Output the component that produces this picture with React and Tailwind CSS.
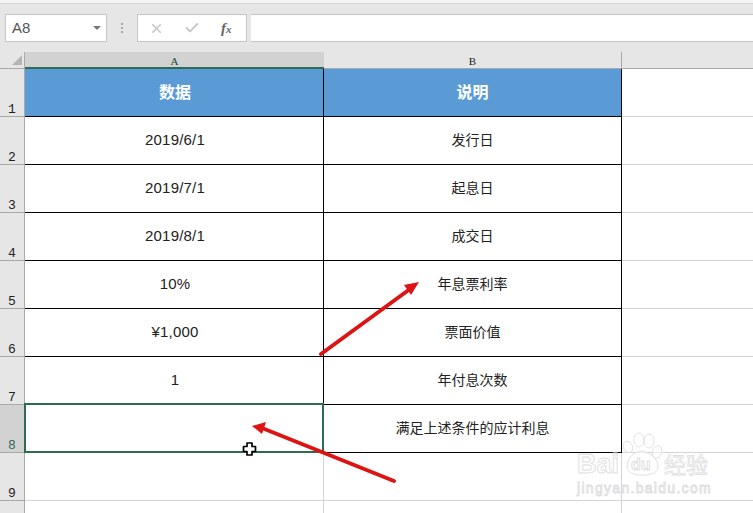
import React from "react";
import { X, Check } from "lucide-react";

const FONT = { fontFamily: '"Liberation Sans", "Noto Sans CJK SC", sans-serif' };

const rows = [
  { n: 2, a: "2019/6/1", b: "发行日" },
  { n: 3, a: "2019/7/1", b: "起息日" },
  { n: 4, a: "2019/8/1", b: "成交日" },
  { n: 5, a: "10%", b: "年息票利率" },
  { n: 6, a: "¥1,000", b: "票面价值" },
  { n: 7, a: "1", b: "年付息次数" },
  { n: 8, a: "", b: "满足上述条件的应计利息", selected: true },
];

function RowHead({ n, selected }) {
  return (
    <div
      className={`w-[25px] shrink-0 h-[48px] flex items-end justify-center border-r border-b border-[#a9a9a9] text-[13px] leading-[12px] font-['Liberation_Mono',monospace] ${
        selected ? "bg-[#d2d2d2] text-[#2f6b50]" : "bg-[#e6e6e6] text-[#222]"
      }`}
    >
      {n}
    </div>
  );
}

function Overlay() {
  return (
    <svg className="absolute left-0 top-0 pointer-events-none" width="753" height="513" viewBox="0 0 753 513">
      {/* red arrows */}
      <line x1="321" y1="354" x2="410" y2="289" stroke="#dc1414" strokeWidth="4" strokeLinecap="round" />
      <polygon points="419,282 404,285 411,295" fill="#dc1414" />
      <line x1="394" y1="481" x2="262" y2="428" stroke="#dc1414" strokeWidth="4" strokeLinecap="round" />
      <polygon points="252,426 266,422 262,434" fill="#dc1414" />
      {/* excel cross cursor */}
      <path
        d="M247 443h5v3.5h3.5v5H252v3.5h-5v-3.5h-3.5v-5H247z"
        fill="#fff"
        stroke="#000"
        strokeWidth="1.7"
        strokeLinejoin="round"
      />
      {/* watermark */}
      <g fill="#fff" fillOpacity="0.55" stroke="#dedede" strokeWidth="0.9">
        <ellipse cx="628" cy="447" rx="4.5" ry="6" transform="rotate(-25 628 447)" />
        <ellipse cx="639" cy="440" rx="5" ry="7" />
        <ellipse cx="649" cy="441" rx="5" ry="7" />
        <ellipse cx="657" cy="452" rx="4.5" ry="6.5" transform="rotate(20 657 452)" />
        <path d="M627 466c0-8 8-15 14-15s17 7 17 15c0 7-6 9-15 9s-16-2-16-9z" />
      </g>
      <g fill="#fff" stroke="#dedede" strokeWidth="0.9">
        <text x="577" y="473" fontSize="27" fontWeight="700">Bai</text>
        <text x="631" y="470" fontSize="16" fontWeight="700">du</text>
        <text x="577" y="493" fontSize="14" letterSpacing="1.3">jingyan.baidu.com</text>
      </g>
      <text
        x="664"
        y="473"
        fontSize="22"
        fill="#fff"
        stroke="#dedede"
        strokeWidth="0.8"
        style={{ fontFamily: '"Noto Sans CJK SC", sans-serif' }}
      >
        经验
      </text>
    </svg>
  );
}

export default function App() {
  return (
    <div className="relative w-[753px] h-[513px] overflow-hidden bg-white" style={FONT}>
      {/* top strip */}
      <div className="h-[4px] bg-[#f4f4f4] border-b border-[#d6d6d6]" />

      {/* formula bar */}
      <div className="h-[48px] bg-[#e6e6e6] pt-[10px] pl-[5px] flex items-start">
        <div className="w-[102px] h-[28px] bg-white border border-[#c6c6c6] flex items-center justify-between pl-[6px] pr-[4px] text-[15px] text-[#555]">
          <span>A8</span>
          <span className="w-0 h-0 border-x-[4px] border-x-transparent border-t-[4px] border-t-[#777] mr-[1px]" />
        </div>
        <div className="w-[30px] h-[28px] flex flex-col items-center justify-center gap-[2px]">
          <span className="w-[2px] h-[2px] bg-[#aaa]" />
          <span className="w-[2px] h-[2px] bg-[#aaa]" />
          <span className="w-[2px] h-[2px] bg-[#aaa]" />
        </div>
        <div className="w-[110px] h-[28px] bg-white border border-[#c6c6c6] flex items-center">
          <X size={15} strokeWidth={2.6} className="ml-[11px] text-[#c8c8c8]" />
          <Check size={16} strokeWidth={3} className="ml-[20px] text-[#c8c8c8]" />
          <span className="ml-[21px] text-[15px] font-bold italic text-[#666] font-['Liberation_Serif',serif]">
            f<span className="text-[11px]">x</span>
          </span>
        </div>
        <div className="ml-[4px] flex-1 h-[28px] bg-white border-y border-[#c6c6c6]" />
      </div>

      {/* column headers */}
      <div className="h-[17px] flex bg-[#e6e6e6] text-[11px] leading-[19px] text-[#222] font-['Liberation_Serif',serif]">
        <div className="w-[25px] shrink-0 border-r border-b border-[#a9a9a9] relative">
          <svg className="absolute left-[12px] top-[3px]" width="11" height="11" viewBox="0 0 11 11">
            <polygon points="10,0 10,10 0,10" fill="#b4b4b4" />
          </svg>
        </div>
        <div className="w-[299px] shrink-0 bg-[#d2d2d2] border-b-2 border-[#2f6b50] text-center text-[#22483a]">A</div>
        <div className="w-[298px] shrink-0 border-r border-b border-[#a9a9a9] text-center">B</div>
        <div className="flex-1 border-b border-[#a9a9a9]" />
      </div>

      {/* row 1, table head */}
      <div className="flex">
        <RowHead n={1} />
        <div className="w-[299px] shrink-0 h-[48px] bg-[#5b9bd5] border-r border-b border-black flex items-center justify-center pl-[2px] text-white font-bold text-[16px]">
          数据
        </div>
        <div className="w-[298px] shrink-0 h-[48px] bg-[#5b9bd5] border-r border-b border-black flex items-center justify-center text-white font-bold text-[16px]">
          说明
        </div>
        <div className="flex-1 border-b border-[#d4d4d4]" />
      </div>

      {rows.map((r) => (
        <div className="flex" key={r.n}>
          <RowHead n={r.n} selected={r.selected} />
          <div className="relative w-[299px] shrink-0 h-[48px] border-r border-b border-black flex items-center justify-center pl-[2px] pb-[1px] text-[15px] tracking-[0.2px] text-[#222]">
            {r.a}
            {r.selected && <div className="absolute left-[-1px] right-[-1px] top-[-2px] bottom-[-1px] border-2 border-[#2f6b50]" />}
          </div>
          <div className="w-[298px] shrink-0 h-[48px] border-r border-b border-black flex items-center justify-center text-[14px] text-[#222]">
            {r.b}
          </div>
          <div className="flex-1 border-b border-[#d4d4d4]" />
        </div>
      ))}

      {/* row 9 and the top of row 10 */}
      <div className="flex">
        <RowHead n={9} />
        <div className="w-[299px] shrink-0 h-[48px] border-r border-b border-[#d4d4d4]" />
        <div className="w-[298px] shrink-0 h-[48px] border-r border-b border-[#d4d4d4]" />
        <div className="flex-1 border-b border-[#d4d4d4]" />
      </div>
      <div className="flex h-[20px]">
        <div className="w-[25px] shrink-0 bg-[#e6e6e6] border-r border-[#a9a9a9]" />
        <div className="w-[299px] shrink-0 border-r border-[#d4d4d4]" />
        <div className="w-[298px] shrink-0 border-r border-[#d4d4d4]" />
      </div>

      <Overlay />
    </div>
  );
}
